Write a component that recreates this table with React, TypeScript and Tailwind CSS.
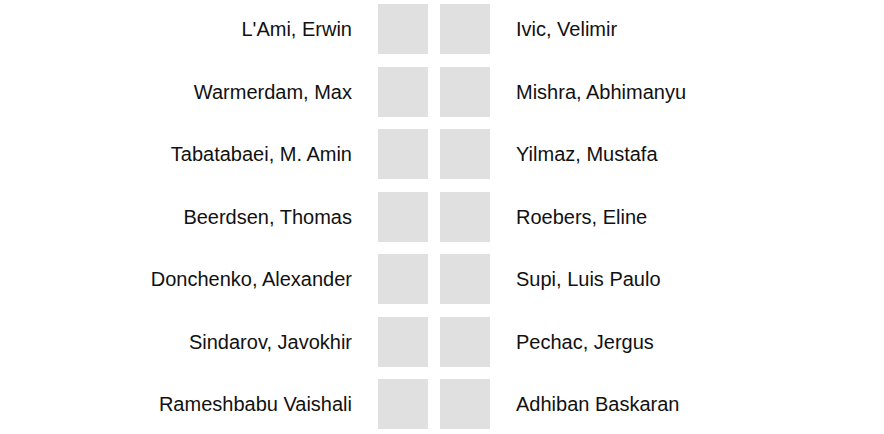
const pairs: [string, string][] = [
  ["L'Ami, Erwin", "Ivic, Velimir"],
  ["Warmerdam, Max", "Mishra, Abhimanyu"],
  ["Tabatabaei, M. Amin", "Yilmaz, Mustafa"],
  ["Beerdsen, Thomas", "Roebers, Eline"],
  ["Donchenko, Alexander", "Supi, Luis Paulo"],
  ["Sindarov, Javokhir", "Pechac, Jergus"],
  ["Rameshbabu Vaishali", "Adhiban Baskaran"],
];

export default function App() {
  return (
    <div className="min-h-screen bg-white pt-1 font-['Liberation_Sans',Arial,sans-serif] text-[20px] text-[#111]">
      <div className="flex flex-col gap-[12.5px]">
        {pairs.map(([white, black]) => (
          <div key={white} className="flex items-center">
            <div className="w-[378px] pr-[26px] text-right leading-none">{white}</div>
            <div className="h-[50px] w-[50px] bg-[#e0e0e0]" />
            <div className="ml-[12px] h-[50px] w-[50px] bg-[#e0e0e0]" />
            <div className="pl-[26px] leading-none">{black}</div>
          </div>
        ))}
      </div>
    </div>
  );
}
